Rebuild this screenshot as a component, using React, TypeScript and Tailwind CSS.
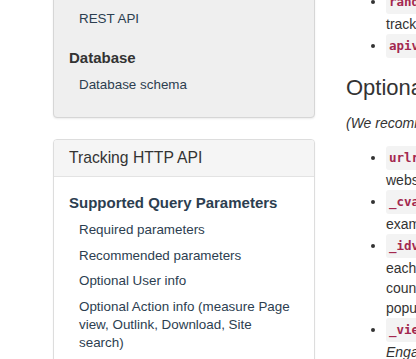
const sans = "font-['Liberation_Sans','Helvetica_Neue',Arial,sans-serif]"

function Code({ children }: { children: string }) {
  return (
    <code className="inline-block rounded-[3px] bg-[#f3f3f3] px-[3px] py-[2px] font-['DejaVu_Sans_Mono','Liberation_Mono',monospace] text-[12.5px] leading-[20px] font-bold text-[#a3284f]">
      {children}
    </code>
  )
}

function NavItem({ children }: { children: string }) {
  return (
    <li className="pt-1 pr-[4px] pb-[3.5px] pl-[10px] text-[13.4px] leading-[18px] text-[#2c3e50]">
      {children}
    </li>
  )
}

export default function App() {
  return (
    <div className={`${sans} flex h-[359px] w-[416px] gap-[31px] overflow-hidden bg-white pl-[53px]`}>
      {/* Sidebar */}
      <aside className="flex w-[262px] shrink-0 flex-col">
        <div className="-mt-[10px] rounded-[4px] border border-[#d6d6d6] bg-[#efefef] px-[15px] pt-[15px] pb-[19.5px] shadow-[0_1px_2px_rgba(0,0,0,0.08)]">
          <ul>
            <NavItem>REST API</NavItem>
          </ul>
          <div className="mt-[17.5px]">
            <h4 className="mb-[5px] text-[15px] leading-[18px] font-bold text-[#333]">Database</h4>
            <ul>
              <NavItem>Database schema</NavItem>
            </ul>
          </div>
        </div>

        <div className="mt-[21px] rounded-[4px] border border-[#dddddd] bg-white shadow-[0_1px_2px_rgba(0,0,0,0.06)]">
          <div className="rounded-t-[3px] border-b border-[#e3e3e3] bg-[#f5f5f5] px-[15px] py-[7px] text-[15.7px] leading-[22px] text-[#333]">
            Tracking HTTP API
          </div>
          <div className="px-[15px] pt-[17px] pb-4">
            <h4 className="mb-[5px] text-[15px] leading-[18px] font-bold text-[#2c3e50]">
              Supported Query Parameters
            </h4>
            <ul>
              <NavItem>Required parameters</NavItem>
              <NavItem>Recommended parameters</NavItem>
              <NavItem>Optional User info</NavItem>
              <NavItem>Optional Action info (measure Page view, Outlink, Download, Site search)</NavItem>
              <NavItem>Optional Event Tracking info</NavItem>
            </ul>
          </div>
        </div>
      </aside>

      {/* Main content */}
      <main className="-mt-[10px] w-[620px] shrink-0 text-[14px] leading-[20px] whitespace-nowrap text-[#333]">
        <ul className="mb-[16px] list-disc pl-[40px]">
          <li>
            <Code>rand</Code> (recommended) — Meant to hold a random value that is generated before each request. Using it helps avoid the
            <br />
            tracking request being cached by the browser or a proxy.
          </li>
          <li>
            <Code>apiv</Code> (recommended) — The parameter &amp;apiv=1 defines the api version to use (currently always set to 1)
          </li>
        </ul>

        <h2 className="mb-[11px] text-[22px] leading-[28px] font-normal">Optional User info</h2>
        <p className="mb-[13px] italic">
          (We recommend that these parameters be set if the information is available and relevant to your use case.)
        </p>

        <ul className="list-disc pl-[40px]">
          <li>
            <Code>urlref</Code> — The full HTTP Referrer URL. This value is used to determine how someone got to your
            <br />
            website (ie, through a website, search engine or campaign).
          </li>
          <li>
            <Code>_cvar</Code> — Visit scope custom variables. This is a JSON encoded string of the custom variable array (see below for an
            <br />
            example value).
          </li>
          <li>
            <Code>_idvc</Code> — The current count of visits for this visitor. To set this value correctly, it would be required to store the value for
            <br />
            each visitor in your application (using sessions or persisting in a database). Then you would manually increment the
            <br />
            counts by one on each new visit or "session", depending on how you choose to define a visit. This value is used to
            <br />
            populate the report <em>Visitors &gt; Engagement &gt; Visits by visit number</em>.
          </li>
          <li>
            <Code>_viewts</Code> — The UNIX timestamp of this visitor's previous visit. This parameter is used to populate the report
            <br />
            <em>Engagement &gt; Visits by days since last visit</em>.
          </li>
        </ul>
      </main>
    </div>
  )
}
